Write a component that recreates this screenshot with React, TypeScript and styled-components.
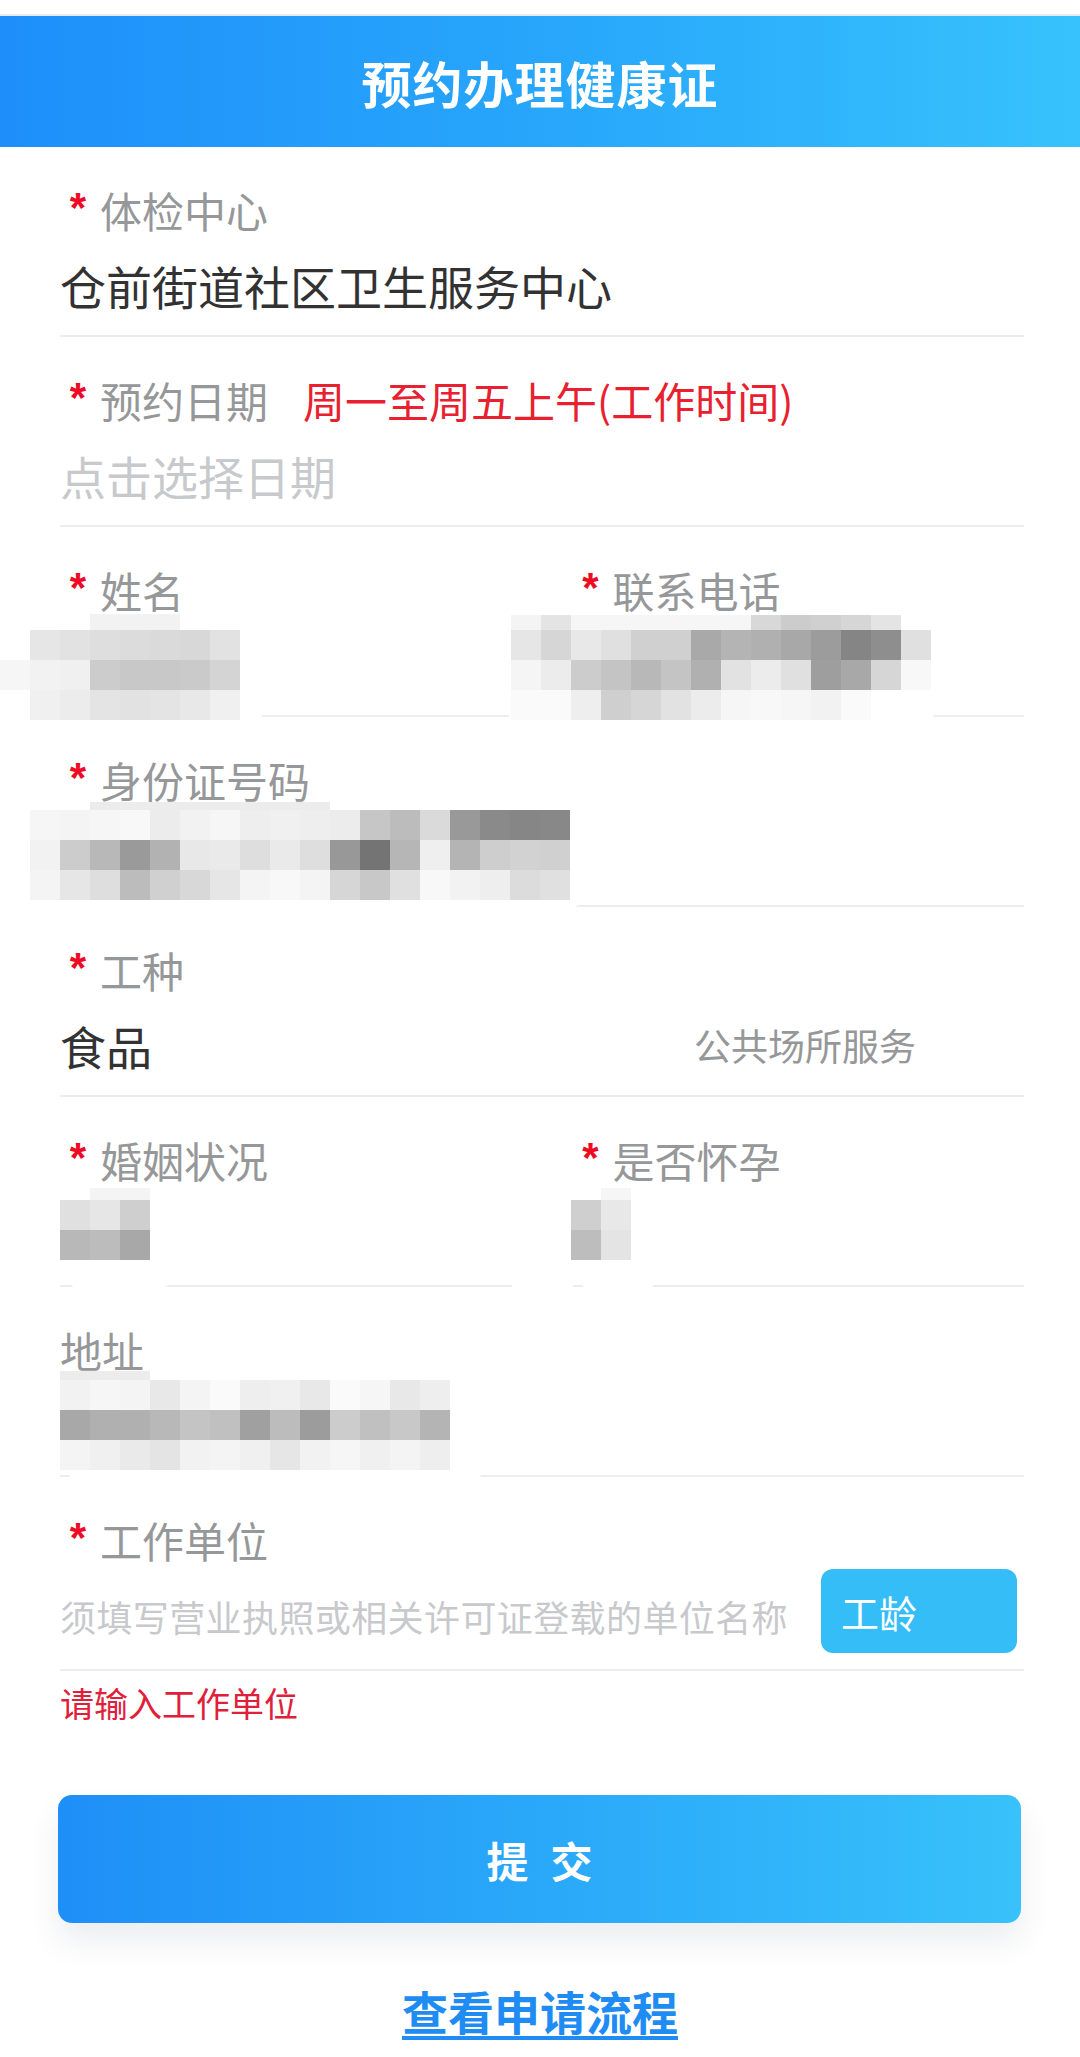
import React from 'react';
import styled, { createGlobalStyle } from 'styled-components';

const GlobalStyle = createGlobalStyle`
  html, body {
    margin: 0;
    padding: 0;
    background: #ffffff;
  }
  body {
    font-family: "Noto Sans CJK SC", "Noto Sans", sans-serif;
  }
`;

const CELL = 30;

type MosaicData = {
  left: number;
  top: number;
  heights: number[];
  rows: string[][];
  pad: [number, number, number];
};

const nameMosaic: MosaicData = {
  left: -60,
  top: 87,
  heights: [16, 30, 30, 30],
  pad: [28, 8, 0],
  rows: [
    ['', '', '', '#f2f2f2', '#f2f2f2', '#f2f2f2', '', ''],
    ['', '#e6e6e6', '#e2e2e2', '#dedede', '#dcdcdc', '#dadada', '#d8d8d8', '#e2e2e2'],
    ['#f6f6f6', '#f2f2f2', '#f0f0f0', '#cccccc', '#c8c8c8', '#c8c8c8', '#cacaca', '#d4d4d4'],
    ['', '#f0f0f0', '#ececec', '#e4e4e4', '#e2e2e2', '#e4e4e4', '#e8e8e8', '#f0f0f0'],
  ],
};

const phoneMosaic: MosaicData = {
  left: -62,
  top: 88,
  heights: [15, 30, 30, 30],
  pad: [10, 6, 10],
  rows: [
    ['#f4f4f4', '#e4e4e4', '#f6f6f6', '#f6f6f6', '#f6f6f6', '#f6f6f6', '#f6f6f6', '#f6f6f6', '#d8d8d8', '#cccccc', '#d0d0d0', '#d6d6d6', '#e4e4e4', ''],
    ['#e6e6e6', '#d6d6d6', '#e8e8e8', '#e0e0e0', '#d0d0d0', '#d0d0d0', '#a9a9a9', '#b4b4b4', '#b0b0b0', '#a8a8a8', '#9c9c9c', '#858585', '#8e8e8e', '#e0e0e0'],
    ['#f5f5f5', '#ececec', '#cccccc', '#c4c4c4', '#b8b8b8', '#c4c4c4', '#b0b0b0', '#e2e2e2', '#ececec', '#e0e0e0', '#9e9e9e', '#a8a8a8', '#d6d6d6', '#f8f8f8'],
    ['#fafafa', '#fafafa', '#eeeeee', '#cfcfcf', '#d6d6d6', '#e2e2e2', '#ececec', '#f6f6f6', '#f8f8f8', '#f6f6f6', '#f2f2f2', '#fafafa', '', ''],
  ],
};

const idMosaic: MosaicData = {
  left: -30,
  top: 85,
  heights: [8, 30, 30, 30],
  pad: [22, 10, 0],
  rows: [
    ['', '', '#ececec', '#ececec', '#ececec', '#ececec', '#ececec', '#ececec', '#ececec', '#ececec', '', '', '', '', '', '', '', ''],
    ['#f6f6f6', '#f4f4f4', '#f6f6f6', '#f8f8f8', '#ececec', '#f2f2f2', '#f6f6f6', '#eeeeee', '#f0f0f0', '#eeeeee', '#ececec', '#c6c6c6', '#bcbcbc', '#dadada', '#999999', '#8a8a8a', '#868686', '#888888'],
    ['#f2f2f2', '#cccccc', '#b8b8b8', '#9a9a9a', '#b2b2b2', '#e8e8e8', '#eaeaea', '#dedede', '#eaeaea', '#dedede', '#989898', '#747474', '#b6b6b6', '#efefef', '#b4b4b4', '#cecece', '#d2d2d2', '#d0d0d0'],
    ['#f4f4f4', '#e6e6e6', '#dedede', '#bcbcbc', '#d0d0d0', '#d8d8d8', '#e6e6e6', '#f4f4f4', '#f8f8f8', '#f4f4f4', '#d6d6d6', '#c8c8c8', '#e0e0e0', '#f8f8f8', '#f2f2f2', '#eeeeee', '#dcdcdc', '#e0e0e0'],
  ],
};

const marriageMosaic: MosaicData = {
  left: 0,
  top: 91,
  heights: [12, 30, 30],
  pad: [29, 32, 0],
  rows: [
    ['', '#f4f4f4', '#f4f4f4'],
    ['#e0e0e0', '#e6e6e6', '#cfcfcf'],
    ['#b8b8b8', '#bcbcbc', '#a8a8a8'],
  ],
};

const pregnantMosaic: MosaicData = {
  left: -2,
  top: 91,
  heights: [12, 30, 30],
  pad: [34, 32, 0],
  rows: [
    ['', '#f6f6f6'],
    ['#cfcfcf', '#e8e8e8'],
    ['#bdbdbd', '#e4e4e4'],
  ],
};

const addressMosaic: MosaicData = {
  left: 0,
  top: 84,
  heights: [9, 30, 30, 30],
  pad: [40, 14, 0],
  rows: [
    ['#ececec', '#ececec', '#ececec', '', '', '', '', '', '', '', '', '', ''],
    ['#f2f2f2', '#f6f6f6', '#f4f4f4', '#e8e8e8', '#f4f4f4', '#fafafa', '#eeeeee', '#f0f0f0', '#e8e8e8', '#fafafa', '#f6f6f6', '#e8e8e8', '#eeeeee'],
    ['#a8a8a8', '#b0b0b0', '#b0b0b0', '#b8b8b8', '#c4c4c4', '#c0c0c0', '#a0a0a0', '#bcbcbc', '#9c9c9c', '#cccccc', '#c0c0c0', '#c8c8c8', '#b4b4b4'],
    ['#f4f4f4', '#f0f0f0', '#eaeaea', '#e4e4e4', '#f2f2f2', '#f4f4f4', '#f0f0f0', '#e6e6e6', '#f2f2f2', '#f6f6f6', '#f0f0f0', '#f4f4f4', '#eeeeee'],
  ],
};

// privacy mosaic patch laid over a field's value and divider
function Mosaic({ data }: { data: MosaicData }) {
  const [pr, pb, pl] = data.pad;
  const cols = data.rows[0].length;
  const firstRow = data.heights[0];
  const cellsH = data.heights.reduce((a, b) => a + b, 0);
  const w = cols * CELL + pl + pr;
  const h = cellsH + pb;
  let y = 0;
  return (
    <MosaicSvg
      $left={data.left - pl}
      $top={data.top}
      width={w}
      height={h}
      viewBox={`0 0 ${w} ${h}`}
    >
      <rect x={0} y={firstRow} width={w} height={h - firstRow} rx={30} fill="#ffffff" />
      {data.rows.map((row, r) => {
        const rowY = y;
        y += data.heights[r];
        return row.map((c, i) =>
          c ? (
            <rect
              key={`${r}-${i}`}
              x={pl + i * CELL}
              y={rowY}
              width={CELL}
              height={data.heights[r]}
              fill={c}
            />
          ) : null
        );
      })}
    </MosaicSvg>
  );
}

function App() {
  return (
    <>
      <GlobalStyle />
      <Page>
        <TopStrip />
        <Header>预约办理健康证</Header>

        <Form>
          <Field>
            <Label><Star>*</Star>体检中心</Label>
            <Value>仓前街道社区卫生服务中心</Value>
          </Field>

          <Field>
            <Label>
              <Star>*</Star>预约日期
              <Note>周一至周五上午(工作时间)</Note>
            </Label>
            <Value $placeholder>点击选择日期</Value>
          </Field>

          <Pair>
            <Field>
              <Label><Star>*</Star>姓名</Label>
              <Value />
              <Mosaic data={nameMosaic} />
            </Field>
            <Field>
              <Label><Star>*</Star>联系电话</Label>
              <Value />
              <Mosaic data={phoneMosaic} />
            </Field>
          </Pair>

          <Field>
            <Label><Star>*</Star>身份证号码</Label>
            <Value />
            <Mosaic data={idMosaic} />
          </Field>

          <Field>
            <Label><Star>*</Star>工种</Label>
            <ValueRow>
              <Value>食品</Value>
              <Option>公共场所服务</Option>
            </ValueRow>
          </Field>

          <Pair>
            <Field>
              <Label><Star>*</Star>婚姻状况</Label>
              <Value />
              <Mosaic data={marriageMosaic} />
            </Field>
            <Field>
              <Label><Star>*</Star>是否怀孕</Label>
              <Value />
              <Mosaic data={pregnantMosaic} />
            </Field>
          </Pair>

          <Field>
            <Label>地址</Label>
            <Value />
            <Mosaic data={addressMosaic} />
          </Field>

          <Field $compact>
            <Label><Star>*</Star>工作单位</Label>
            <InputRow>
              <Placeholder>须填写营业执照或相关许可证登载的单位名称</Placeholder>
              <SideButton>工龄</SideButton>
            </InputRow>
          </Field>
          <ErrorText>请输入工作单位</ErrorText>
        </Form>

        <SubmitButton>提交</SubmitButton>
        <FlowLink>查看申请流程</FlowLink>
      </Page>
    </>
  );
}

const Page = styled.div`
  width: 1080px;
  min-height: 2057px;
  background: #ffffff;
  display: flex;
  flex-direction: column;
  overflow: hidden;
`;

const TopStrip = styled.div`
  height: 14px;
  background: #ffffff;
  border-bottom: 2px solid #e6ecf2;
`;

const Header = styled.div`
  height: 131px;
  display: flex;
  align-items: center;
  justify-content: center;
  background: linear-gradient(90deg, #1e8ffa 0%, #27a6fb 50%, #37c2fc 100%);
  color: #ffffff;
  font-size: 50px;
  font-weight: 700;
  letter-spacing: 1px;
`;

const Form = styled.div`
  padding: 0 56px 0 60px;
  display: flex;
  flex-direction: column;
`;

const Pair = styled.div`
  display: grid;
  grid-template-columns: 1fr 1fr;
  column-gap: 61px;
`;

const Field = styled.div<{ $compact?: boolean }>`
  position: relative;
  padding: 38px 0 ${(p) => (p.$compact ? '16px' : '25px')};
  border-bottom: 2px solid #ebedf0;
`;

const Label = styled.div`
  height: 50px;
  line-height: 50px;
  font-size: 42px;
  color: #969799;
  white-space: nowrap;
`;

const Star = styled.span`
  display: inline-block;
  width: 36px;
  margin-right: 4px;
  text-align: center;
  vertical-align: top;
  color: #ee0a24;
  font-family: "Liberation Sans", sans-serif;
  font-size: 42px;
  font-weight: 700;
  line-height: 46px;
`;

const Note = styled.span`
  margin-left: 35px;
  color: #e8202f;
`;

const Value = styled.div<{ $placeholder?: boolean }>`
  height: 50px;
  line-height: 50px;
  margin-top: 25px;
  font-size: 46px;
  color: ${(p) => (p.$placeholder ? '#c8c9cc' : '#323233')};
  white-space: nowrap;
`;

const ValueRow = styled.div`
  display: flex;
  align-items: flex-end;

  & > ${Value} {
    flex: none;
  }
`;

const Option = styled.div`
  margin-left: auto;
  margin-right: 108px;
  height: 50px;
  line-height: 50px;
  font-size: 37px;
  color: #969799;
`;

const InputRow = styled.div`
  display: flex;
  align-items: center;
  gap: 16px;
  margin-top: 4px;
  padding-right: 7px;
`;

const Placeholder = styled.div`
  flex: 1;
  min-width: 0;
  padding-top: 10px;
  font-size: 36px;
  letter-spacing: 0.4px;
  line-height: 50px;
  color: #c8c9cc;
  white-space: nowrap;
`;

const SideButton = styled.div`
  flex: none;
  width: 196px;
  height: 84px;
  box-sizing: border-box;
  padding-left: 20px;
  display: flex;
  align-items: center;
  border-radius: 12px;
  background: #35bdf7;
  color: #ffffff;
  font-size: 38px;
`;

const ErrorText = styled.div`
  margin-top: 9px;
  line-height: 46px;
  font-size: 34px;
  color: #e0203a;
`;

const SubmitButton = styled.div`
  margin: 69px 59px 0 58px;
  height: 128px;
  border-radius: 14px;
  background: linear-gradient(90deg, #1e8ff7 0%, #2aa8f9 50%, #38c1fa 100%);
  box-shadow: 0 18px 32px rgba(40, 60, 90, 0.09);
  display: flex;
  align-items: center;
  justify-content: center;
  color: #ffffff;
  font-size: 42px;
  font-weight: 700;
  letter-spacing: 22px;
  padding-left: 22px;
`;

const FlowLink = styled.div`
  margin-top: 57px;
  align-self: center;
  line-height: 60px;
  font-size: 46px;
  font-weight: 700;
  color: #1f8cf3;
  text-decoration: underline;
  text-decoration-thickness: 4px;
  text-underline-offset: 6px;
`;

const MosaicSvg = styled.svg<{ $left: number; $top: number }>`
  position: absolute;
  left: ${(p) => p.$left}px;
  top: ${(p) => p.$top}px;
  display: block;
  filter: blur(0.6px);
`;

export default App;
